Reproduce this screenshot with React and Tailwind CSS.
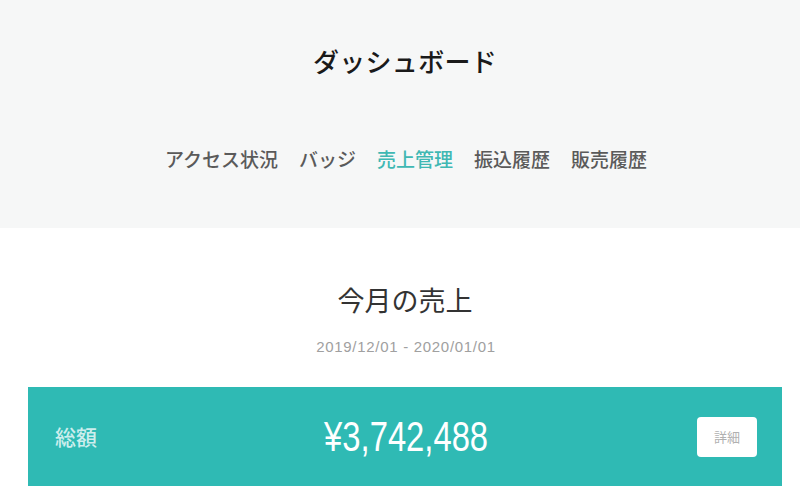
export default function App() {
  const jp = "font-['Noto_Sans_CJK_JP','Noto_Sans',sans-serif]";
  return (
    <div className={`w-[800px] h-[500px] bg-white overflow-hidden ${jp}`}>
      <div className="h-[228px] bg-[#f6f7f7] flex flex-col items-center pt-[42px] pl-[10px]">
        <h1 className="text-[26px] leading-[38px] font-medium text-[#1a1a1a] tracking-[0.3px]">ダッシュボード</h1>
        <nav className="mt-[66px] flex items-center gap-[21px] text-[19px] leading-[26px] font-medium text-[#5a5a5a] pl-[2px]">
          <span>アクセス状況</span>
          <span>バッジ</span>
          <span className="text-[#3fb8b3]">売上管理</span>
          <span>振込履歴</span>
          <span>販売履歴</span>
        </nav>
      </div>
      <div className="flex flex-col items-center pt-[53px] pl-[10px]">
        <h2 className="text-[27px] leading-[38px] text-[#333] font-normal">今月の売上</h2>
        <div className="mt-[18px] text-[15px] leading-[20px] tracking-[0.7px] text-[#a0a0a0] font-['Liberation_Sans',sans-serif] pl-[2px]">
          2019/12/01 - 2020/01/01
        </div>
      </div>
      <div className="mt-[30px] ml-[28px] w-[754px] h-[99px] bg-[#2fbab4] grid grid-cols-[1fr_auto_1fr] items-center px-[27px] pr-[25px]">
        <div className="text-[21px] text-[#cdeeed] font-medium">総額</div>
        <div className="text-white">
          <span className="inline-block text-[42px] leading-[48px] font-['Liberation_Sans',sans-serif] scale-x-[0.78] origin-center">¥3,742,488</span>
        </div>
        <div className="flex justify-end">
          <button className="w-[60px] h-[40px] bg-white rounded-[4px] text-[13px] text-[#b0b0b0] flex items-center justify-center">詳細</button>
        </div>
      </div>
    </div>
  );
}
